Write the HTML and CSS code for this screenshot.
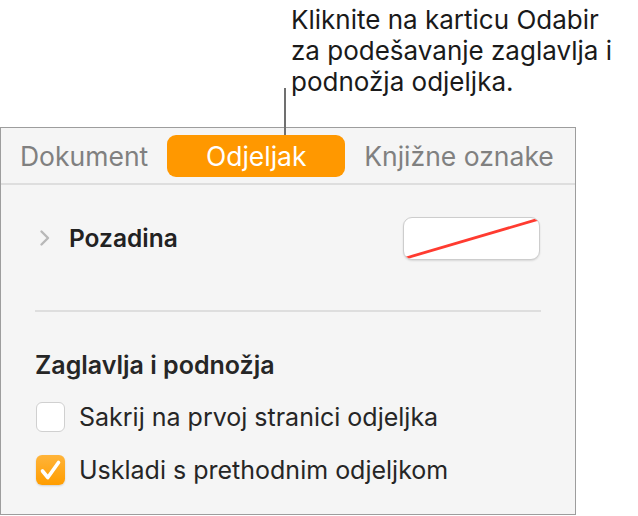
FILE: index.html
```html
<!DOCTYPE html>
<html lang="hr">
<head>
<meta charset="utf-8">
<title>Odjeljak</title>
<link rel="stylesheet" href="styles.css">
</head>
<body>
<div class="page">
  <p class="callout">Kliknite na karticu Odabir<br>za podešavanje zaglavlja i<br>podnožja odjeljka.</p>
  <div class="leader"></div>
  <div class="panel">
    <div class="tabs">
      <span class="tab">Dokument</span>
      <span class="tab active">Odjeljak</span>
      <span class="tab">Knjižne oznake</span>
    </div>
    <div class="content">
      <div class="row bg-row">
        <svg class="chev" width="12" height="18" viewBox="0 0 12 18"><path d="M2.5 2.5 L9 9 L2.5 15.5" fill="none" stroke="#b8b8b8" stroke-width="2.4" stroke-linecap="round" stroke-linejoin="round"/></svg>
        <span class="label">Pozadina</span>
        <span class="well"><svg width="137" height="43" viewBox="0 0 137 43"><line x1="3" y1="41" x2="136" y2="2" stroke="#ff3b30" stroke-width="2.8"/></svg></span>
      </div>
      <div class="divider"></div>
      <h2 class="heading">Zaglavlja i podnožja</h2>
      <label class="check first"><span class="box"></span>Sakrij na prvoj stranici odjeljka</label>
      <label class="check second"><span class="box on"><svg width="29" height="30" viewBox="0 0 29 30"><path d="M6.5 16 L11.8 22.5 L22.5 7.5" fill="none" stroke="#fff" stroke-width="3.6" stroke-linecap="round" stroke-linejoin="round"/></svg></span>Uskladi s prethodnim odjeljkom</label>
    </div>
  </div>
</div>
</body>
</html>
```
FILE: styles.css
```css
html, body {
  margin: 0;
  padding: 0;
  background: #ffffff;
}
body {
  width: 638px;
  height: 516px;
  overflow: hidden;
  font-family: Inter, "Noto Sans", "Liberation Sans", sans-serif;
  color: #262626;
}
.page {
  position: relative;
  height: 516px;
}
.callout {
  margin: 0;
  padding: 4px 0 0 291px;
  font-size: 26px;
  line-height: 31px;
  color: #1a1a1a;
  height: 127px;
  box-sizing: border-box;
}
.leader {
  position: absolute;
  left: 284px;
  top: 88px;
  width: 2px;
  height: 47px;
  background: #707070;
  z-index: 2;
}
.panel {
  width: 576px;
  height: 388px;
  box-sizing: border-box;
  border: 1px solid #9d9d9d;
  background: #f5f5f5;
}
.tabs {
  display: flex;
  align-items: center;
  height: 57px;
  box-sizing: border-box;
  border-bottom: 2px solid #dedede;
  padding: 0 0 0 19px;
}
.tab {
  font-size: 26.5px;
  color: #808080;
}
.tab.active {
  width: 178px;
  height: 42px;
  margin: 0 19px 0 19px;
  border-radius: 9px;
  background: #ff9800;
  color: #ffffff;
  display: flex;
  align-items: center;
  justify-content: center;
}
.content {
  padding: 0 34px;
}
.row {
  display: flex;
  align-items: center;
}
.bg-row {
  height: 106px;
}
.chev {
  margin: 0 18px 0 4px;
}
.label {
  font-size: 24.5px;
  font-weight: 600;
  color: #222;
  flex: 1;
}
.well {
  width: 137px;
  height: 43px;
  box-sizing: border-box;
  border: 1px solid #cdcdcd;
  border-radius: 9px;
  background: #fff;
  box-shadow: 0 1px 2px rgba(0,0,0,0.12);
  overflow: hidden;
  margin-right: 1px;
  display: block;
}
.well svg {
  display: block;
  margin: -1px;
}
.divider {
  margin-top: 19px;
  height: 2px;
  background: #dedede;
}
.heading {
  margin: 0;
  padding-top: 38px;
  font-size: 25px;
  line-height: 30px;
  font-weight: 600;
  color: #262626;
}
.check {
  display: flex;
  align-items: center;
  gap: 14px;
  font-size: 25px;
  line-height: 30px;
  color: #262626;
}
.check.first {
  margin-top: 22px;
}
.check.second {
  margin-top: 23px;
}
.box {
  width: 29px;
  height: 30px;
  margin-left: 1px;
  box-sizing: border-box;
  border: 1px solid #d0d0d0;
  border-radius: 6px;
  background: #fff;
  display: flex;
  align-items: center;
  justify-content: center;
  flex: none;
}
.box.on {
  border: none;
  background: linear-gradient(#ffb43a, #ff9d00);
  box-shadow: 0 1px 2px rgba(0,0,0,0.15);
}
.box.on svg {
  display: block;
}
```
